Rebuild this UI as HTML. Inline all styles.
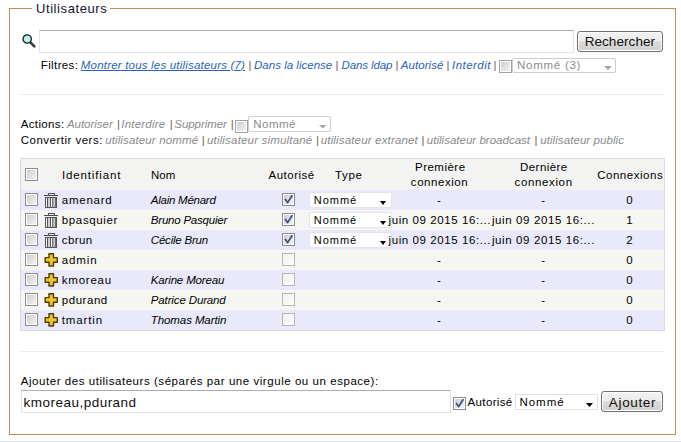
<!DOCTYPE html>
<html><head><meta charset="utf-8"><style>
html,body{margin:0;padding:0;background:#fff;width:681px;height:442px;overflow:hidden;position:relative;font-family:"Liberation Sans", sans-serif;}
.t{position:absolute;white-space:nowrap;}
.a{position:absolute;box-sizing:border-box;}
</style></head><body>
<!-- fieldset -->
<div class="a" style="left:9px;top:8px;width:667px;height:427px;border:1px solid #c48d55;"></div>
<div class="a" style="left:32px;top:6px;width:78px;height:5px;background:#fff;"></div>
<div class="a" style="left:0;top:441px;width:681px;height:1px;background:#dbe5f1;"></div>

<!-- search icon -->
<svg class="a" style="left:18px;top:30px" width="22" height="22" viewBox="0 0 22 22">
  <line x1="12.4" y1="12.4" x2="16.4" y2="16.4" stroke="#3a3a3a" stroke-width="2.6" stroke-linecap="round"/>
  <circle cx="9.2" cy="9" r="4.15" fill="#bdf0e9" stroke="#1c2828" stroke-width="1.4"/>
</svg>
<!-- search input -->
<div class="a" style="left:39px;top:30px;width:535px;height:23px;border:1px solid #dfe3ea;border-top-color:#abadb3;background:#fff;"></div>
<!-- Rechercher button -->
<div class="a" style="left:577px;top:31px;width:86px;height:21px;border:1px solid #707070;border-radius:3px;background:linear-gradient(#f2f2f2 0%,#ebebeb 50%,#dddddd 50%,#cfcfcf 100%);box-shadow:inset 0 0 0 1px #fcfcfc;"></div>

<!-- filter checkbox + select -->
<div class="a cb dis2" style="left:499px;top:60px;height:12.5px;"></div>
<div class="a" style="left:512px;top:58px;width:104px;height:15px;border:1px solid #cdcdcd;border-radius:2px;background:#fff;"></div>
<svg class="a" style="left:604px;top:66px" width="8" height="5"><path d="M0 0H8L4 4Z" fill="#a8a8a8"/></svg>

<!-- hr 1 -->
<div class="a" style="left:20px;top:94px;width:645px;height:1px;background:#ececec;"></div>

<!-- actions checkbox + select -->
<div class="a cb dis2" style="left:235px;top:120px;height:12.5px;"></div>
<div class="a" style="left:248px;top:116px;width:83px;height:16px;border:1px solid #cdcdcd;border-radius:2px;background:#fff;"></div>
<svg class="a" style="left:319px;top:125px" width="8" height="5"><path d="M0 0H7.5L3.75 3.5Z" fill="#a8a8a8"/></svg>

<!-- table -->
<div class="a" style="left:20px;top:158px;width:645px;height:173px;border:1px solid #d9d9de;background:#f3f3f2;"></div>
<div class="a" style="left:21px;top:190px;width:643px;height:20px;background:#e9e9fb;"></div>
<div class="a" style="left:21px;top:210px;width:643px;height:20px;background:#f5f5f1;"></div>
<div class="a" style="left:21px;top:230px;width:643px;height:20px;background:#e9e9fb;"></div>
<div class="a" style="left:21px;top:250px;width:643px;height:20px;background:#f5f5f1;"></div>
<div class="a" style="left:21px;top:270px;width:643px;height:20px;background:#e9e9fb;"></div>
<div class="a" style="left:21px;top:290px;width:643px;height:20px;background:#f5f5f1;"></div>
<div class="a" style="left:21px;top:310px;width:643px;height:20px;background:#e9e9fb;"></div>

<!-- header checkbox -->
<div class="a cb" style="left:25px;top:168px;"></div>
<!-- row checkboxes -->
<div class="a cb" style="left:25px;top:193px;"></div>
<div class="a cb" style="left:25px;top:213px;"></div>
<div class="a cb" style="left:25px;top:233px;"></div>
<div class="a cb" style="left:25px;top:253px;"></div>
<div class="a cb" style="left:25px;top:273px;"></div>
<div class="a cb" style="left:25px;top:293px;"></div>
<div class="a cb" style="left:25px;top:313px;"></div>

<!-- trash icons -->
<svg class="a" style="left:44px;top:193px" width="14" height="15"><rect x="4.5" y="0.5" width="6" height="2" fill="#e8e8e8" stroke="#555" stroke-width="1"/>
      <rect x="0" y="2" width="14" height="1" fill="#4a4a4a"/>
      <rect x="1" y="4" width="12" height="11" fill="#555"/>
      <rect x="2" y="5" width="1" height="9" fill="#fff"/>
      <rect x="4" y="5" width="2" height="9" fill="#d0d0d0"/>
      <rect x="7" y="5" width="1.2" height="9" fill="#fff"/>
      <rect x="9.2" y="5" width="2" height="9" fill="#c8c8c8"/></svg>
<svg class="a" style="left:44px;top:213px" width="14" height="15"><rect x="4.5" y="0.5" width="6" height="2" fill="#e8e8e8" stroke="#555" stroke-width="1"/>
      <rect x="0" y="2" width="14" height="1" fill="#4a4a4a"/>
      <rect x="1" y="4" width="12" height="11" fill="#555"/>
      <rect x="2" y="5" width="1" height="9" fill="#fff"/>
      <rect x="4" y="5" width="2" height="9" fill="#d0d0d0"/>
      <rect x="7" y="5" width="1.2" height="9" fill="#fff"/>
      <rect x="9.2" y="5" width="2" height="9" fill="#c8c8c8"/></svg>
<svg class="a" style="left:44px;top:233px" width="14" height="15"><rect x="4.5" y="0.5" width="6" height="2" fill="#e8e8e8" stroke="#555" stroke-width="1"/>
      <rect x="0" y="2" width="14" height="1" fill="#4a4a4a"/>
      <rect x="1" y="4" width="12" height="11" fill="#555"/>
      <rect x="2" y="5" width="1" height="9" fill="#fff"/>
      <rect x="4" y="5" width="2" height="9" fill="#d0d0d0"/>
      <rect x="7" y="5" width="1.2" height="9" fill="#fff"/>
      <rect x="9.2" y="5" width="2" height="9" fill="#c8c8c8"/></svg>
<!-- plus icons -->
<svg class="a" style="left:44px;top:253px" width="15" height="15"><path d="M5 0.8H9.5V4.6H13.3V9.2H9.5V13H5V9.2H1.2V4.6H5Z" fill="#f2c425" stroke="#4a3c10" stroke-width="1.4" stroke-linejoin="round"/></svg>
<svg class="a" style="left:44px;top:273px" width="15" height="15"><path d="M5 0.8H9.5V4.6H13.3V9.2H9.5V13H5V9.2H1.2V4.6H5Z" fill="#f2c425" stroke="#4a3c10" stroke-width="1.4" stroke-linejoin="round"/></svg>
<svg class="a" style="left:44px;top:293px" width="15" height="15"><path d="M5 0.8H9.5V4.6H13.3V9.2H9.5V13H5V9.2H1.2V4.6H5Z" fill="#f2c425" stroke="#4a3c10" stroke-width="1.4" stroke-linejoin="round"/></svg>
<svg class="a" style="left:44px;top:313px" width="15" height="15"><path d="M5 0.8H9.5V4.6H13.3V9.2H9.5V13H5V9.2H1.2V4.6H5Z" fill="#f2c425" stroke="#4a3c10" stroke-width="1.4" stroke-linejoin="round"/></svg>



<!-- authorised checkboxes -->
<div class="a cb ck" style="left:282px;top:193px;"></div>
<div class="a cb ck" style="left:282px;top:213px;"></div>
<div class="a cb ck" style="left:282px;top:233px;"></div>
<div class="a cb dis" style="left:282px;top:253px;"></div>
<div class="a cb dis" style="left:282px;top:273px;"></div>
<div class="a cb dis" style="left:282px;top:293px;"></div>
<div class="a cb dis" style="left:282px;top:313px;"></div>

<!-- type selects -->
<div class="a sel" style="left:309px;top:192px;"></div>
<div class="a sel" style="left:309px;top:212px;"></div>
<div class="a sel" style="left:309px;top:232px;"></div>

<!-- hr 2 -->
<div class="a" style="left:20px;top:351px;width:645px;height:1px;background:#ececec;"></div>

<!-- bottom input -->
<div class="a" style="left:21px;top:390px;width:430px;height:23px;border:1px solid #dfe3ea;border-top-color:#abadb3;background:#fff;"></div>
<div class="a cb ck" style="left:453px;top:397px;height:12.5px;"></div>
<div class="a" style="left:515px;top:394px;width:83px;height:16px;border:1px solid #e2e2e2;background:#fff;"></div>
<svg class="a" style="left:586px;top:403px" width="8" height="5"><path d="M0 0H7L3.5 4Z" fill="#000"/></svg>
<div class="a" style="left:601px;top:391px;width:62px;height:21px;border:1px solid #707070;border-radius:3px;background:linear-gradient(#f2f2f2 0%,#ebebeb 50%,#dddddd 50%,#cfcfcf 100%);box-shadow:inset 0 0 0 1px #fcfcfc;"></div>

<style>
.cb{width:13px;height:13px;border:1px solid #8c8c8c;background:linear-gradient(135deg,#cacaca,#f6f6f6);box-shadow:inset 0 0 0 1px #fff;}
.dis2{border-color:#a0a0a0;}
.dis{border-color:#b6b6b6;background:linear-gradient(135deg,#f2f2f2,#fcfcfc);box-shadow:none;}

.sel{width:83px;height:16px;border:1px solid #e4e4e4;background:#fff;}
.sel::after{content:"";position:absolute;left:70px;top:8px;border-left:3.5px solid transparent;border-right:3.5px solid transparent;border-top:4px solid #000;}
</style>

<svg class="a" style="left:282px;top:193px" width="13" height="13"><path d="M3.4 6.4L5.6 9.6L10 2.8" fill="none" stroke="#3d4b82" stroke-width="1.7" stroke-linecap="round" stroke-linejoin="round"/></svg>
<svg class="a" style="left:282px;top:213px" width="13" height="13"><path d="M3.4 6.4L5.6 9.6L10 2.8" fill="none" stroke="#3d4b82" stroke-width="1.7" stroke-linecap="round" stroke-linejoin="round"/></svg>
<svg class="a" style="left:282px;top:233px" width="13" height="13"><path d="M3.4 6.4L5.6 9.6L10 2.8" fill="none" stroke="#3d4b82" stroke-width="1.7" stroke-linecap="round" stroke-linejoin="round"/></svg>
<svg class="a" style="left:453px;top:397px" width="13" height="13"><path d="M3.4 6.4L5.6 9.6L10 2.8" fill="none" stroke="#3d4b82" stroke-width="1.7" stroke-linecap="round" stroke-linejoin="round"/></svg>

<span class='t' style='left:35.98px;top:2.00px;font-size:13px;line-height:13px;color:#14142a;letter-spacing:0.586px;'>Utilisateurs</span><span class='t' style='left:40.79px;top:59.87px;font-size:11.5px;line-height:11.5px;color:#000;letter-spacing:0.381px;'>Filtres:</span><span class='t' style='left:80.79px;top:59.87px;font-size:11.5px;line-height:11.5px;color:#2a62b8;font-style:italic;letter-spacing:0.197px;text-decoration:underline;'>Montrer tous les utilisateurs (7)</span><span class='t' style='left:248.54px;top:59.87px;font-size:11.5px;line-height:11.5px;color:#6b6258;'>|</span><span class='t' style='left:254.04px;top:59.87px;font-size:11.5px;line-height:11.5px;color:#2a62b8;font-style:italic;letter-spacing:0.013px;'>Dans la license</span><span class='t' style='left:335.54px;top:59.87px;font-size:11.5px;line-height:11.5px;color:#6b6258;'>|</span><span class='t' style='left:341.54px;top:59.87px;font-size:11.5px;line-height:11.5px;color:#2a62b8;font-style:italic;letter-spacing:-0.110px;'>Dans ldap</span><span class='t' style='left:395.54px;top:59.87px;font-size:11.5px;line-height:11.5px;color:#6b6258;'>|</span><span class='t' style='left:400.79px;top:59.87px;font-size:11.5px;line-height:11.5px;color:#2a62b8;font-style:italic;letter-spacing:0.069px;'>Autorisé</span><span class='t' style='left:446.54px;top:59.87px;font-size:11.5px;line-height:11.5px;color:#6b6258;'>|</span><span class='t' style='left:452.04px;top:59.87px;font-size:11.5px;line-height:11.5px;color:#2a62b8;font-style:italic;letter-spacing:0.464px;'>Interdit</span><span class='t' style='left:493.54px;top:59.87px;font-size:11.5px;line-height:11.5px;color:#6b6258;'>|</span><span class='t' style='left:517.04px;top:60.47px;font-size:11.5px;line-height:11.5px;color:#8c8c8c;letter-spacing:0.738px;'>Nommé (3)</span><span class='t' style='left:20.74px;top:118.87px;font-size:11.5px;line-height:11.5px;color:#000;letter-spacing:0.357px;'>Actions:</span><span class='t' style='left:66.94px;top:118.87px;font-size:11.5px;line-height:11.5px;color:#8a8a8a;font-style:italic;letter-spacing:-0.026px;'>Autoriser</span><span class='t' style='left:117.04px;top:118.87px;font-size:11.5px;line-height:11.5px;color:#6b6258;'>|</span><span class='t' style='left:121.24px;top:118.87px;font-size:11.5px;line-height:11.5px;color:#8a8a8a;font-style:italic;letter-spacing:0.217px;'>Interdire</span><span class='t' style='left:169.74px;top:118.87px;font-size:11.5px;line-height:11.5px;color:#6b6258;'>|</span><span class='t' style='left:174.34px;top:118.87px;font-size:11.5px;line-height:11.5px;color:#8a8a8a;font-style:italic;letter-spacing:-0.068px;'>Supprimer</span><span class='t' style='left:230.84px;top:118.87px;font-size:11.5px;line-height:11.5px;color:#6b6258;'>|</span><span class='t' style='left:253.24px;top:118.57px;font-size:11.5px;line-height:11.5px;color:#8c8c8c;letter-spacing:0.489px;'>Nommé</span><span class='t' style='left:20.74px;top:134.87px;font-size:11.5px;line-height:11.5px;color:#000;letter-spacing:0.488px;'>Convertir vers:</span><span class='t' style='left:105.14px;top:134.87px;font-size:11.5px;line-height:11.5px;color:#8a8a8a;font-style:italic;letter-spacing:0.135px;'>utilisateur nommé</span><span class='t' style='left:201.74px;top:134.87px;font-size:11.5px;line-height:11.5px;color:#6b6258;'>|</span><span class='t' style='left:206.94px;top:134.87px;font-size:11.5px;line-height:11.5px;color:#8a8a8a;font-style:italic;letter-spacing:0.184px;'>utilisateur simultané</span><span class='t' style='left:316.04px;top:134.87px;font-size:11.5px;line-height:11.5px;color:#6b6258;'>|</span><span class='t' style='left:320.74px;top:134.87px;font-size:11.5px;line-height:11.5px;color:#8a8a8a;font-style:italic;letter-spacing:0.161px;'>utilisateur extranet</span><span class='t' style='left:421.54px;top:134.87px;font-size:11.5px;line-height:11.5px;color:#6b6258;'>|</span><span class='t' style='left:426.84px;top:134.87px;font-size:11.5px;line-height:11.5px;color:#8a8a8a;font-style:italic;letter-spacing:0.015px;'>utilisateur broadcast</span><span class='t' style='left:534.54px;top:134.87px;font-size:11.5px;line-height:11.5px;color:#6b6258;'>|</span><span class='t' style='left:540.24px;top:134.87px;font-size:11.5px;line-height:11.5px;color:#8a8a8a;font-style:italic;letter-spacing:0.074px;'>utilisateur public</span><span class='t' style='left:62.04px;top:169.87px;font-size:11.5px;line-height:11.5px;color:#000;letter-spacing:0.845px;'>Identifiant</span><span class='t' style='left:151.04px;top:169.87px;font-size:11.5px;line-height:11.5px;color:#000;'>Nom</span><span class='t' style='left:268.54px;top:169.87px;font-size:11.5px;line-height:11.5px;color:#000;letter-spacing:0.490px;'>Autorisé</span><span class='t' style='left:335.04px;top:169.87px;font-size:11.5px;line-height:11.5px;color:#000;letter-spacing:0.661px;'>Type</span><span class='t' style='left:415.04px;top:162.07px;font-size:11.5px;line-height:11.5px;color:#000;letter-spacing:0.481px;'>Première</span><span class='t' style='left:410.84px;top:176.57px;font-size:11.5px;line-height:11.5px;color:#000;letter-spacing:0.548px;'>connexion</span><span class='t' style='left:520.04px;top:162.07px;font-size:11.5px;line-height:11.5px;color:#000;letter-spacing:0.444px;'>Dernière</span><span class='t' style='left:514.54px;top:176.57px;font-size:11.5px;line-height:11.5px;color:#000;letter-spacing:0.635px;'>connexion</span><span class='t' style='left:597.14px;top:169.87px;font-size:11.5px;line-height:11.5px;color:#000;letter-spacing:0.532px;'>Connexions</span><span class='t' style='left:61.84px;top:194.87px;font-size:11.5px;line-height:11.5px;color:#000;letter-spacing:0.738px;'>amenard</span><span class='t' style='left:150.84px;top:194.87px;font-size:11.5px;line-height:11.5px;color:#000;font-style:italic;letter-spacing:-0.250px;'>Alain Ménard</span><span class='t' style='left:437.04px;top:194.87px;font-size:11.5px;line-height:11.5px;color:#000;'>-</span><span class='t' style='left:541.24px;top:194.87px;font-size:11.5px;line-height:11.5px;color:#000;'>-</span><span class='t' style='left:626.34px;top:194.87px;font-size:11.5px;line-height:11.5px;color:#000;'>0</span><span class='t' style='left:313.86px;top:194.69px;font-size:11px;line-height:11px;color:#000;letter-spacing:0.966px;'>Nommé</span><span class='t' style='left:61.84px;top:214.87px;font-size:11.5px;line-height:11.5px;color:#000;letter-spacing:0.626px;'>bpasquier</span><span class='t' style='left:150.84px;top:214.87px;font-size:11.5px;line-height:11.5px;color:#000;font-style:italic;letter-spacing:-0.220px;'>Bruno Pasquier</span><span class='t' style='left:388.54px;top:214.87px;font-size:11.5px;line-height:11.5px;color:#000;letter-spacing:0.582px;'>juin 09 2015 16:...</span><span class='t' style='left:491.94px;top:214.87px;font-size:11.5px;line-height:11.5px;color:#000;letter-spacing:0.610px;'>juin 09 2015 16:...</span><span class='t' style='left:626.34px;top:214.87px;font-size:11.5px;line-height:11.5px;color:#000;'>1</span><span class='t' style='left:313.86px;top:214.69px;font-size:11px;line-height:11px;color:#000;letter-spacing:0.966px;'>Nommé</span><span class='t' style='left:61.84px;top:234.87px;font-size:11.5px;line-height:11.5px;color:#000;letter-spacing:0.385px;'>cbrun</span><span class='t' style='left:150.84px;top:234.87px;font-size:11.5px;line-height:11.5px;color:#000;font-style:italic;letter-spacing:-0.213px;'>Cécile Brun</span><span class='t' style='left:388.54px;top:234.87px;font-size:11.5px;line-height:11.5px;color:#000;letter-spacing:0.582px;'>juin 09 2015 16:...</span><span class='t' style='left:491.94px;top:234.87px;font-size:11.5px;line-height:11.5px;color:#000;letter-spacing:0.610px;'>juin 09 2015 16:...</span><span class='t' style='left:626.34px;top:234.87px;font-size:11.5px;line-height:11.5px;color:#000;'>2</span><span class='t' style='left:313.86px;top:234.69px;font-size:11px;line-height:11px;color:#000;letter-spacing:0.966px;'>Nommé</span><span class='t' style='left:61.84px;top:254.87px;font-size:11.5px;line-height:11.5px;color:#000;letter-spacing:0.848px;'>admin</span><span class='t' style='left:437.04px;top:254.87px;font-size:11.5px;line-height:11.5px;color:#000;'>-</span><span class='t' style='left:541.24px;top:254.87px;font-size:11.5px;line-height:11.5px;color:#000;'>-</span><span class='t' style='left:626.34px;top:254.87px;font-size:11.5px;line-height:11.5px;color:#000;'>0</span><span class='t' style='left:61.84px;top:274.87px;font-size:11.5px;line-height:11.5px;color:#000;letter-spacing:0.762px;'>kmoreau</span><span class='t' style='left:150.84px;top:274.87px;font-size:11.5px;line-height:11.5px;color:#000;font-style:italic;letter-spacing:-0.160px;'>Karine Moreau</span><span class='t' style='left:437.04px;top:274.87px;font-size:11.5px;line-height:11.5px;color:#000;'>-</span><span class='t' style='left:541.24px;top:274.87px;font-size:11.5px;line-height:11.5px;color:#000;'>-</span><span class='t' style='left:626.34px;top:274.87px;font-size:11.5px;line-height:11.5px;color:#000;'>0</span><span class='t' style='left:61.84px;top:294.87px;font-size:11.5px;line-height:11.5px;color:#000;letter-spacing:0.534px;'>pdurand</span><span class='t' style='left:150.84px;top:294.87px;font-size:11.5px;line-height:11.5px;color:#000;font-style:italic;letter-spacing:-0.138px;'>Patrice Durand</span><span class='t' style='left:437.04px;top:294.87px;font-size:11.5px;line-height:11.5px;color:#000;'>-</span><span class='t' style='left:541.24px;top:294.87px;font-size:11.5px;line-height:11.5px;color:#000;'>-</span><span class='t' style='left:626.34px;top:294.87px;font-size:11.5px;line-height:11.5px;color:#000;'>0</span><span class='t' style='left:61.84px;top:314.87px;font-size:11.5px;line-height:11.5px;color:#000;letter-spacing:0.844px;'>tmartin</span><span class='t' style='left:150.84px;top:314.87px;font-size:11.5px;line-height:11.5px;color:#000;font-style:italic;letter-spacing:-0.097px;'>Thomas Martin</span><span class='t' style='left:437.04px;top:314.87px;font-size:11.5px;line-height:11.5px;color:#000;'>-</span><span class='t' style='left:541.24px;top:314.87px;font-size:11.5px;line-height:11.5px;color:#000;'>-</span><span class='t' style='left:626.34px;top:314.87px;font-size:11.5px;line-height:11.5px;color:#000;'>0</span><span class='t' style='left:20.74px;top:376.37px;font-size:11.5px;line-height:11.5px;color:#000;letter-spacing:0.549px;'>Ajouter des utilisateurs (séparés par une virgule ou un espace):</span><span class='t' style='left:23.46px;top:396.17px;font-size:13.5px;line-height:13.5px;color:#101010;letter-spacing:0.489px;'>kmoreau,pdurand</span><span class='t' style='left:467.54px;top:397.47px;font-size:11.5px;line-height:11.5px;color:#000;letter-spacing:0.362px;'>Autorisé</span><span class='t' style='left:519.44px;top:397.27px;font-size:11.5px;line-height:11.5px;color:#000;letter-spacing:0.989px;'>Nommé</span><span class='t' style='left:608.86px;top:395.87px;font-size:13.5px;line-height:13.5px;color:#101010;letter-spacing:0.633px;'>Ajouter</span><span class='t' style='left:584.66px;top:35.17px;font-size:13.5px;line-height:13.5px;color:#101010;letter-spacing:0.067px;'>Rechercher</span>
</body></html>
